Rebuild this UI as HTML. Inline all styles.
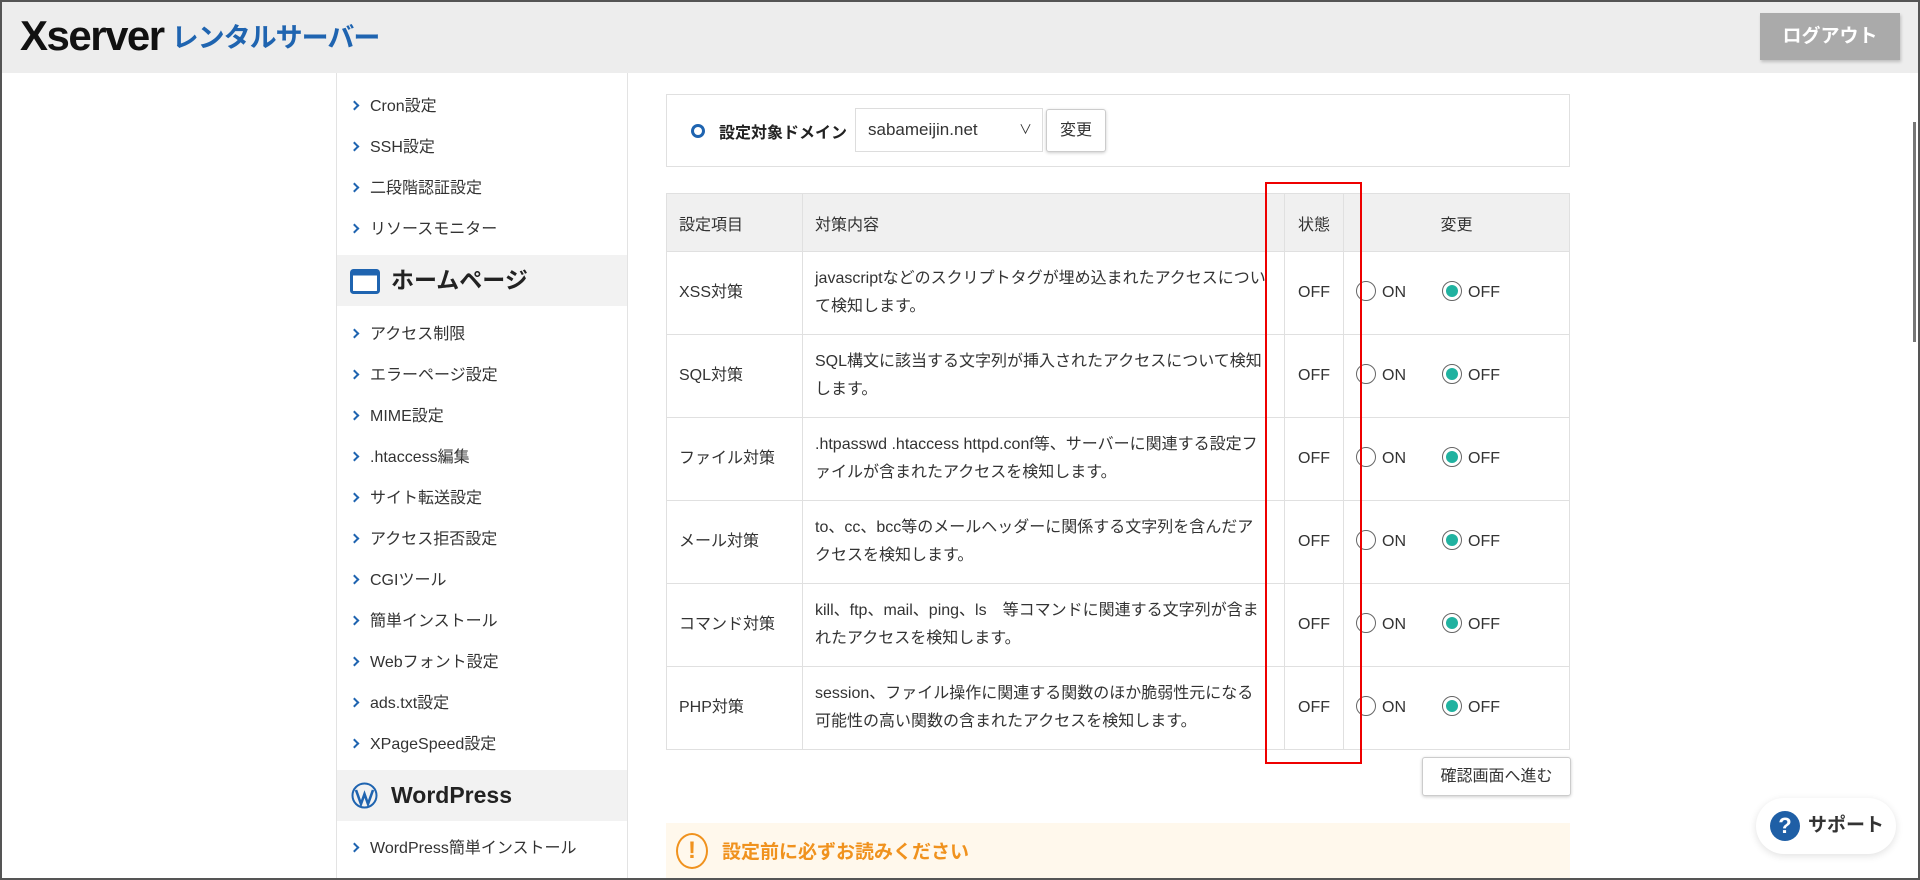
<!DOCTYPE html>
<html><head><meta charset="utf-8">
<style>
*{box-sizing:border-box;margin:0;padding:0}
body{width:1920px;height:880px;overflow:hidden;background:#fff;font-family:"Liberation Sans","Noto Sans CJK JP",sans-serif;color:#333;position:relative}
.frame{position:absolute;inset:0;border:2px solid #555;pointer-events:none;z-index:20}
.hdr{position:absolute;left:0;top:0;width:1920px;height:73px;background:#ededed}
.logo{position:absolute;left:20px;top:12px;font-size:42px;font-weight:bold;color:#111;letter-spacing:-1.5px;transform:scaleY(1);}
.logo span{color:#1f64b0;font-size:27px;margin-left:8px;letter-spacing:-1px;position:relative;top:-3px}
.logout{position:absolute;left:1760px;top:13px;width:140px;height:47px;background:#aaa;color:#fff;font-weight:bold;font-size:19px;text-align:center;line-height:47px;box-shadow:1px 2px 3px rgba(0,0,0,.2)}
.side{position:absolute;left:336px;top:73px;width:292px;height:807px;border-left:1px solid #e3e3e3;border-right:1px solid #e3e3e3}
.it{position:absolute;left:14px;font-size:16px;color:#333;height:22px;line-height:22px}
.it:before{content:"";display:inline-block;width:5px;height:5px;border-right:2px solid #1f64b0;border-top:2px solid #1f64b0;transform:rotate(45deg);margin-right:12px;position:relative;top:-2px}
.sec{position:absolute;left:0;width:290px;height:51px;background:#f2f2f2;font-size:23px;font-weight:bold;color:#222;line-height:51px;padding-left:54px}
.dom{position:absolute;left:666px;top:94px;width:904px;height:73px;border:1px solid #e0e0e0}
table{position:absolute;left:666px;top:193px;width:904px;border-collapse:collapse;font-size:16px}
td,th{border:1px solid #e0e0e0;text-align:left;font-weight:normal;padding:0 12px;vertical-align:middle}
th{background:#f0f0f0;height:58px}
td{height:83px;line-height:28px}
td.d{padding-right:18px}
.c{text-align:center}
.rad{display:inline-block;width:20px;height:20px;border:1px solid #666;border-radius:50%;vertical-align:middle;margin-right:6px;position:relative;top:-2px}
.rad.on:after{content:"";position:absolute;left:3px;top:3px;width:12px;height:12px;border-radius:50%;background:#20b2a0}
.sp{display:inline-block;width:36px}
.red{position:absolute;left:1265px;top:182px;width:97px;height:582px;border:2px solid #e00}
.btn{position:absolute;background:#fff;border:1px solid #ccc;border-radius:3px;box-shadow:0 1px 3px rgba(0,0,0,.2);text-align:center;font-size:16px;color:#333}
.warn{position:absolute;left:666px;top:823px;width:904px;height:57px;background:#fff8ec}
.sup{position:absolute;left:1756px;top:798px;width:140px;height:56px;border-radius:28px;background:#fff;box-shadow:0 2px 8px rgba(0,0,0,.12);font-weight:bold;font-size:19px;line-height:56px;color:#333}
</style></head><body>
<div class="hdr"><div class="logo">Xserver<span>レンタルサーバー</span></div><div class="logout">ログアウト</div></div>
<div class="side">
<div class="it" style="top:23px">Cron設定</div>
<div class="it" style="top:64px">SSH設定</div>
<div class="it" style="top:105px">二段階認証設定</div>
<div class="it" style="top:146px">リソースモニター</div>
<div class="sec" style="top:182px"><svg style="position:absolute;left:13px;top:14px" width="30" height="25"><rect x="1.5" y="1.5" width="27" height="22" rx="2" fill="#fff" stroke="#1f64b0" stroke-width="3"/><rect x="1.5" y="1.5" width="27" height="5" fill="#1f64b0"/></svg>ホームページ</div>
<div class="it" style="top:251px">アクセス制限</div>
<div class="it" style="top:292px">エラーページ設定</div>
<div class="it" style="top:333px">MIME設定</div>
<div class="it" style="top:374px">.htaccess編集</div>
<div class="it" style="top:415px">サイト転送設定</div>
<div class="it" style="top:456px">アクセス拒否設定</div>
<div class="it" style="top:497px">CGIツール</div>
<div class="it" style="top:538px">簡単インストール</div>
<div class="it" style="top:579px">Webフォント設定</div>
<div class="it" style="top:620px">ads.txt設定</div>
<div class="it" style="top:661px">XPageSpeed設定</div>
<div class="sec" style="top:697px;font-family:'Liberation Sans',sans-serif"><svg style="position:absolute;left:14px;top:12px" width="27" height="27" viewBox="0 0 27 27"><circle cx="13.5" cy="13.5" r="12" fill="none" stroke="#1f64b0" stroke-width="2"/><path d="M5 8 L10 22 L13.5 12 L17 22 L22 8" fill="none" stroke="#1f64b0" stroke-width="2.6"/></svg>WordPress</div>
<div class="it" style="top:765px">WordPress簡単インストール</div>
</div>
<div class="dom">
<div style="position:absolute;left:24px;top:29px;width:14px;height:14px;border:3px solid #1f64b0;border-radius:50%"></div>
<div style="position:absolute;left:52px;top:24px;font-size:16px;font-weight:bold;color:#222">設定対象ドメイン</div>
<div style="position:absolute;left:188px;top:13px;width:188px;height:44px;border:1px solid #ddd;font-size:17px;line-height:42px;padding-left:12px">sabameijin.net<span style="position:absolute;right:10px;font-size:13px">&#8744;</span></div>
<div class="btn" style="left:379px;top:14px;width:60px;height:43px;line-height:41px">変更</div>
</div>
<table>
<tr><th style="width:136px">設定項目</th><th style="width:482px">対策内容</th><th class="c" style="width:59px">状態</th><th class="c">変更</th></tr>
<tr><td>XSS対策</td><td class="d">javascriptなどのスクリプトタグが埋め込まれたアクセスについて検知します。</td><td class="c">OFF</td><td><span class="rad"></span>ON<span class="sp"></span><span class="rad on"></span>OFF</td></tr>
<tr><td>SQL対策</td><td class="d">SQL構文に該当する文字列が挿入されたアクセスについて検知します。</td><td class="c">OFF</td><td><span class="rad"></span>ON<span class="sp"></span><span class="rad on"></span>OFF</td></tr>
<tr><td>ファイル対策</td><td class="d">.htpasswd .htaccess httpd.conf等、サーバーに関連する設定ファイルが含まれたアクセスを検知します。</td><td class="c">OFF</td><td><span class="rad"></span>ON<span class="sp"></span><span class="rad on"></span>OFF</td></tr>
<tr><td>メール対策</td><td class="d">to、cc、bcc等のメールヘッダーに関係する文字列を含んだアクセスを検知します。</td><td class="c">OFF</td><td><span class="rad"></span>ON<span class="sp"></span><span class="rad on"></span>OFF</td></tr>
<tr><td>コマンド対策</td><td class="d">kill、ftp、mail、ping、ls　等コマンドに関連する文字列が含まれたアクセスを検知します。</td><td class="c">OFF</td><td><span class="rad"></span>ON<span class="sp"></span><span class="rad on"></span>OFF</td></tr>
<tr><td>PHP対策</td><td class="d">session、ファイル操作に関連する関数のほか脆弱性元になる可能性の高い関数の含まれたアクセスを検知します。</td><td class="c">OFF</td><td><span class="rad"></span>ON<span class="sp"></span><span class="rad on"></span>OFF</td></tr>
</table>
<div class="red"></div>
<div class="btn" style="left:1422px;top:757px;width:149px;height:39px;line-height:37px">確認画面へ進む</div>
<div class="warn">
<div style="position:absolute;left:10px;top:10px;width:32px;height:36px;border:2px solid #f0921e;border-radius:50%;color:#f0921e;font-weight:bold;font-size:24px;text-align:center;line-height:32px">!</div>
<div style="position:absolute;left:56px;top:14px;font-size:19px;font-weight:bold;color:#f0921e">設定前に必ずお読みください</div>
</div>
<div class="sup"><div style="position:absolute;left:14px;top:13px;width:30px;height:30px;border-radius:50%;background:#1f5fa6;color:#fff;text-align:center;line-height:30px;font-size:22px">?</div><span style="position:absolute;left:52px">サポート</span></div>
<div style="position:absolute;left:1913px;top:122px;width:3px;height:220px;background:#777"></div>
<div class="frame"></div>
</body></html>
